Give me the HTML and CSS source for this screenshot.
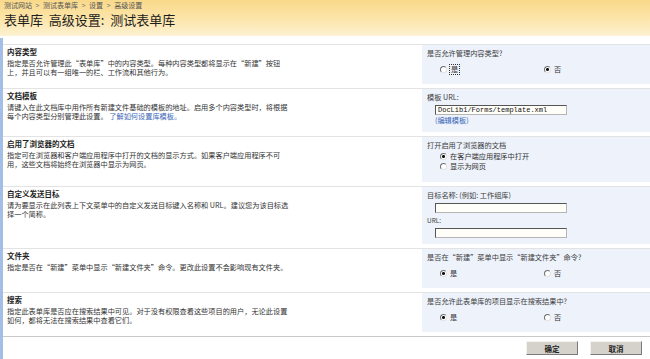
FILE: index.html
```html
<!DOCTYPE html>
<html>
	<head>
		<meta charset="utf-8">
		<title>高级设置</title>
		<link rel="stylesheet" href="styles.css">
	</head>
	<body>
		<div class="titlebar">
			<div class="crumbs">
				<a href="#">测试网站</a> <span class="sep">&gt;</span>
				<a href="#">测试表单库</a> <span class="sep">&gt;</span>
				<a href="#">设置</a> <span class="sep">&gt;</span>
				<span>高级设置</span>
			</div>
			<h1>表单库&nbsp; 高级设置:&nbsp; 测试表单库</h1>
		</div>

		<form class="content" onsubmit="return false">
			<div class="section short">
				<div class="desc">
					<h3>内容类型</h3>
					<p>指定是否允许管理此“表单库”中的内容类型。每种内容类型都将显示在“新建”按钮<br>上，并且可以有一组唯一的栏、工作流和其他行为。</p>
				</div>
				<div class="ctrl">
					<div class="label">是否允许管理内容类型?</div>
					<div class="choices">
						<label><input type="radio" name="ct"><span class="focus">是</span></label>
						<label><input type="radio" name="ct" checked>否</label>
					</div>
				</div>
			</div>

			<div class="section medium">
				<div class="desc">
					<h3>文档模板</h3>
					<p>请键入在此文档库中用作所有新建文件基础的模板的地址。启用多个内容类型时，将根据<br>每个内容类型分别管理此设置。 <a href="#">了解如何设置库模板。</a></p>
				</div>
				<div class="ctrl">
					<div class="label">模板 URL:</div>
					<input class="field" type="text" value="DocLib1/Forms/template.xml">
					<a class="edit" href="#">(编辑模板)</a>
				</div>
			</div>

			<div class="section tall">
				<div class="desc">
					<h3>启用了浏览器的文档</h3>
					<p>指定可在浏览器和客户端应用程序中打开的文档的显示方式。如果客户端应用程序不可<br>用，这些文档将始终在浏览器中显示为网页。</p>
				</div>
				<div class="ctrl">
					<div class="label">打开启用了浏览器的文档</div>
					<div class="stack">
						<label><input type="radio" name="br" checked>在客户端应用程序中打开</label>
						<label><input type="radio" name="br">显示为网页</label>
					</div>
				</div>
			</div>

			<div class="section xtall">
				<div class="desc">
					<h3>自定义发送目标</h3>
					<p>请为要显示在此列表上下文菜单中的自定义发送目标键入名称和 URL。建议您为该目标选<br>择一个简称。</p>
				</div>
				<div class="ctrl">
					<div class="label">目标名称: (例如: 工作组库)</div>
					<input class="field" type="text">
					<div class="label small">URL:</div>
					<input class="field" type="text">
				</div>
			</div>

			<div class="section short">
				<div class="desc">
					<h3>文件夹</h3>
					<p>指定是否在“新建”菜单中显示“新建文件夹”命令。更改此设置不会影响现有文件夹。</p>
				</div>
				<div class="ctrl">
					<div class="label">是否在“新建”菜单中显示“新建文件夹”命令?</div>
					<div class="choices">
						<label><input type="radio" name="fd" checked>是</label>
						<label><input type="radio" name="fd">否</label>
					</div>
				</div>
			</div>

			<div class="section short">
				<div class="desc">
					<h3>搜索</h3>
					<p>指定此表单库是否应在搜索结果中可见。对于没有权限查看这些项目的用户，无论此设置<br>如何，都将无法在搜索结果中查看它们。</p>
				</div>
				<div class="ctrl">
					<div class="label">是否允许此表单库的项目显示在搜索结果中?</div>
					<div class="choices">
						<label><input type="radio" name="sr" checked>是</label>
						<label><input type="radio" name="sr">否</label>
					</div>
				</div>
			</div>

			<div class="buttons">
				<button type="submit">确定</button>
				<button type="button">取消</button>
			</div>
		</form>
	</body>
</html>
```

FILE: styles.css
```css
body{
	margin: 0;
	font-family: "Noto Sans CJK SC", "Noto Sans", sans-serif;
	font-size: 7.2px;
	color: #333;
	background: #fff;
}
a{
	color: #3a66b7;
	text-decoration: none;
}
.titlebar{
	height: 36px;
	box-sizing: border-box;
	padding: 1px 0 0 4px;
	background: linear-gradient(#f9d98a, #fce6ac 55%, #fdf1d2);
}
.crumbs{
	font-size: 7px;
	line-height: 9px;
	color: #555;
}
.crumbs a{
	color: #555;
}
.crumbs .sep{
	color: #777;
	margin: 0 2px;
}
h1{
	margin: 2px 0 0;
	font-size: 13px;
	line-height: 16px;
	font-weight: normal;
	color: #1c1c1c;
}
.content{
	margin: 2px 0 0;
	padding-top: 6px;
	border-left: 3px solid #a3bfe6;
}
.section{
	display: flex;
	border-top: 1px solid #e3e3e3;
}
.short{
	height: 43px;
}
.medium{
	height: 47px;
}
.tall{
	height: 49px;
}
.xtall{
	height: 61px;
}
.desc{
	width: 419px;
	box-sizing: border-box;
	padding: 2px 0 0 4px;
}
.desc h3{
	margin: 0 0 3px;
	font-size: 7.5px;
	line-height: 9px;
	font-weight: bold;
	color: #1e1e1e;
}
.desc p{
	margin: 0;
	line-height: 9px;
	white-space: nowrap;
}
.ctrl{
	flex: 1;
	margin-bottom: 4px;
	padding: 4px 0 0 5px;
	background: #edf2fb;
}
.label{
	line-height: 9px;
	color: #3c3c3c;
}
.label.small{
	margin-top: 3px;
	font-size: 6.5px;
}
.choices{
	display: flex;
	margin-top: 7px;
	padding-left: 13px;
	line-height: 9px;
}
.choices label{
	width: 104px;
	display: flex;
	align-items: center;
}
.stack{
	margin-top: 1px;
	padding-left: 13px;
}
.stack label{
	display: flex;
	align-items: center;
	height: 10px;
}
input[type=radio]{
	appearance: none;
	width: 7px;
	height: 7px;
	box-sizing: border-box;
	margin: 0 3px 0 0;
	border: 1px solid;
	border-color: #6f6f6f #e2e2e2 #e2e2e2 #6f6f6f;
	border-radius: 50%;
	background: #fff;
}
input[type=radio]:checked{
	background: radial-gradient(circle, #111 1.2px, #fff 1.8px);
}
.focus{
	outline: 1px dotted #333;
	padding: 0 1px;
}
.field{
	display: block;
	width: 132px;
	height: 10px;
	box-sizing: border-box;
	margin: 3px 0 0 8px;
	padding: 0 2px;
	border: 1px solid #b5b5b5;
	border-top-color: #555;
	border-left-color: #555;
	background: #fffef8;
	font-family: "Liberation Mono", monospace;
	font-size: 7px;
	color: #111;
}
.edit{
	display: block;
	margin: 1px 0 0 8px;
	line-height: 9px;
}
.buttons{
	display: flex;
	justify-content: flex-end;
	gap: 12px;
	padding: 4px 8px 0 0;
	border-top: 1px solid #c9c9c9;
	height: 30px;
}
button{
	width: 52px;
	height: 14px;
	padding: 0;
	border: 1px solid;
	border-color: #f4f3ef #7a7a7a #7a7a7a #f4f3ef;
	background: #d5d2cb;
	font-family: "Noto Sans CJK SC", sans-serif;
	font-size: 7.5px;
	font-weight: bold;
	color: #222;
}
```
